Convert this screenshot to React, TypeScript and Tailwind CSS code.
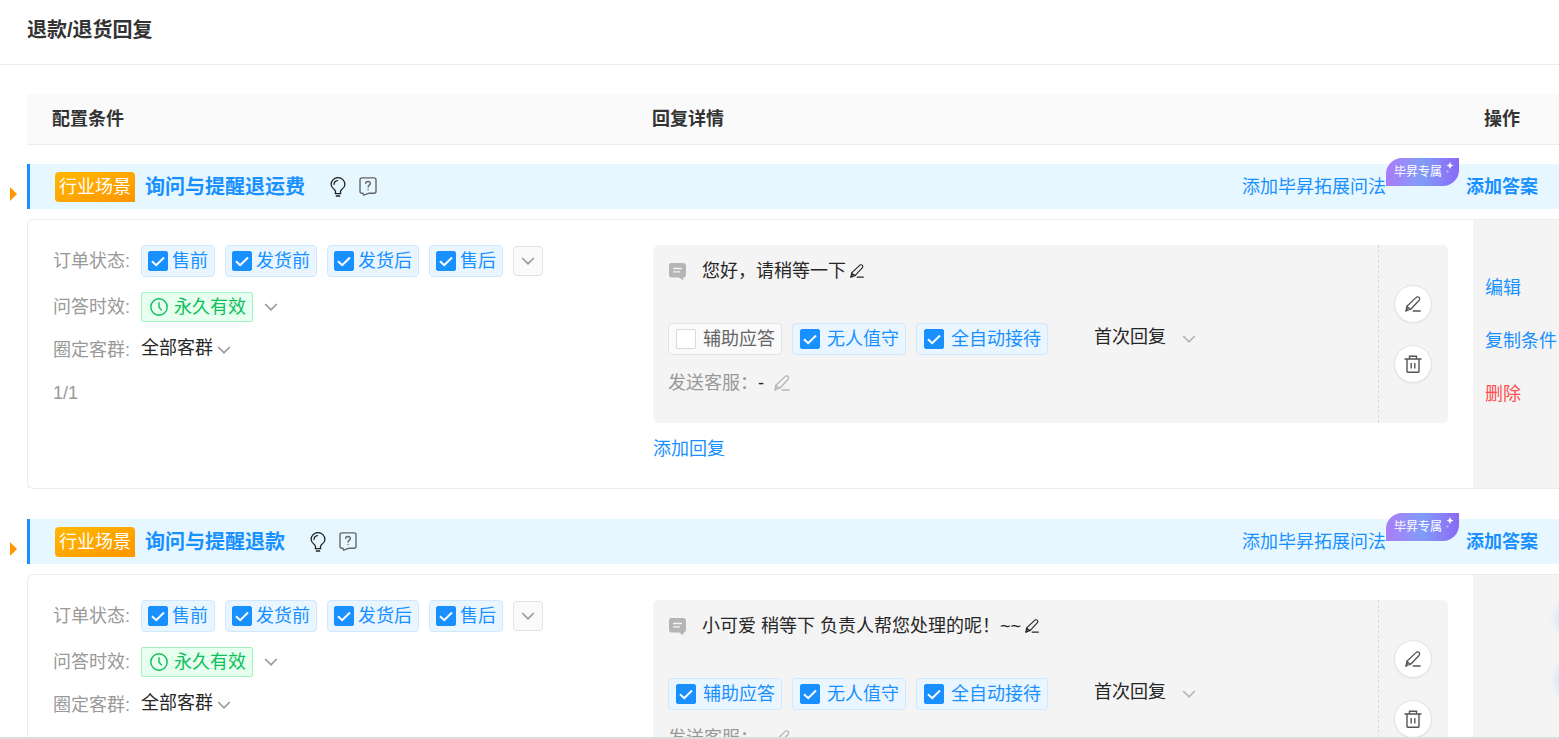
import React, { useState } from "react";

type IconProps = { className?: string };

function ChevronIcon({ className = "" }: IconProps) {
  return (
    <svg viewBox="0 0 14 10" className={`h-[10px] w-[14px] shrink-0 ${className}`} fill="none" stroke="currentColor" strokeWidth="1.7" aria-hidden="true">
      <path d="M1.200 2 7 7.900 12.800 2" />
    </svg>
  );
}

function PencilIcon({ className = "" }: IconProps) {
  return (
    <svg viewBox="0 0 16 16" className={`shrink-0 ${className}`} fill="none" stroke="currentColor" strokeWidth="1.300" strokeLinejoin="round" strokeLinecap="round" aria-hidden="true">
      <path d="M11 1.600c.7-.9 2-1 2.900-.3.9.7 1 2 .3 2.900L6 13 1 15l.9-4.800z" />
      <path d="M1.900 10.400 5.600 13.200M1 15l2-3" />
      <path d="M8.200 15h7" />
    </svg>
  );
}

function TrashIcon({ className = "" }: IconProps) {
  return (
    <svg viewBox="0 0 18 18" className={`shrink-0 ${className}`} fill="none" stroke="currentColor" strokeWidth="1.400" aria-hidden="true">
      <path d="M.5 4h17M5.500 4V1.200h7V4M3 4v12.500q0 .7.700.7h10.600q.7 0 .7-.7V4M7.200 8v5.500M10.800 8v5.500" />
    </svg>
  );
}

function BulbIcon({ className = "" }: IconProps) {
  return (
    <svg viewBox="0 0 16 20" className={`shrink-0 ${className}`} fill="none" stroke="currentColor" strokeWidth="1.3" strokeLinecap="round" aria-hidden="true">
      <path d="M5.500 16v-1.500c0-1-.6-1.500-1.500-2.300A6.800 6.800 0 0 1 1.100 7.500a6.900 6.900 0 0 1 13.800 0c0 2-1.200 3.600-2.900 4.700-.9.800-1.500 1.300-1.500 2.300V16" />
      <path d="M5.200 16.600h5.600M6.300 19h3.400M4 7.400A4 4 0 0 1 7.600 3.600" />
    </svg>
  );
}

function QuestionIcon({ className = "" }: IconProps) {
  return (
    <svg viewBox="0 0 18 19" className={`shrink-0 ${className}`} fill="none" stroke="currentColor" strokeWidth="1.400" strokeLinecap="round" strokeLinejoin="round" aria-hidden="true">
      <path d="M3 .9h12q2 0 2 2v11.400q0 2-2 2H9.500L4.700 18.200l-.8-1.900H3q-2 0-2-2V2.900Q1 .9 3 .9z" />
      <path d="M6.700 6.300C6.800 3.900 11.300 3.800 11.300 6.400c0 1.700-2.200 1.700-2.200 3.600M9.100 12.400v.2" />
    </svg>
  );
}

function MessageIcon({ className = "" }: IconProps) {
  return (
    <svg viewBox="0 0 18 18" className={`shrink-0 ${className}`} aria-hidden="true">
      <path fill="currentColor" d="M3.500 1h11.500q3 0 3 3v8.500q0 2.600-2.500 3v2.300l-1.500-.3-3-2h-7.500q-2.500 0-2.500-3V4q0-3 2.500-3z" />
      <path d="M5 6.500h9M5 9.800h7" stroke="#f4f4f4" strokeWidth="1.300" fill="none" />
    </svg>
  );
}

function ClockIcon({ className = "" }: IconProps) {
  return (
    <svg viewBox="0 0 18 18" className={`shrink-0 ${className}`} fill="none" stroke="currentColor" strokeWidth="1.400" aria-hidden="true">
      <circle cx="9" cy="9" r="8.200" />
      <path d="M9 4.200v5.100l2.800 3.100" />
    </svg>
  );
}

function CheckChip({ label, checked, roomy = false }: { label: string; checked: boolean; roomy?: boolean }) {
  const [on, setOn] = useState(checked);
  return (
    <label
      className={`flex h-8 shrink-0 cursor-pointer items-center whitespace-nowrap rounded border pr-1.5 ${roomy ? "gap-[7px] pl-[7px]" : "gap-1 pl-1.5"} ${
        on ? "border-[#cfe8ff] bg-[#eaf6ff] text-[#1890ff]" : "border-[#e4e4e4] bg-[#fafafa] text-[#666]"
      }`}
    >
      <span className="grid size-5 place-items-center">
        <input
          type="checkbox"
          checked={on}
          onChange={(e) => setOn(e.target.checked)}
          className="col-start-1 row-start-1 size-5 appearance-none rounded-xs border border-[#d9d9d9] bg-white checked:border-[#1890ff] checked:bg-[#1890ff]"
        />
        {on && (
          <svg viewBox="0 0 14 11" className="pointer-events-none col-start-1 row-start-1 h-[11px] w-[14px]" fill="none" stroke="#fff" strokeWidth="2" aria-hidden="true">
            <path d="M1 5.200 5.200 9.200 13 1.500" />
          </svg>
        )}
      </span>
      {label}
    </label>
  );
}

function SelectField({ label, value, className }: { label: string; value: string; className: string }) {
  return (
    <span className={`flex items-center ${className}`}>
      <select aria-label={label} defaultValue={value} className="h-7 cursor-pointer appearance-none bg-transparent pb-1 leading-6 text-[#262626]">
        <option>{value}</option>
      </select>
      <ChevronIcon />
    </span>
  );
}

type Scene = {
  title: string;
  reply: string;
  modes: { label: string; checked: boolean }[];
  sender: string;
  actions: boolean;
};

const orderStates = ["售前", "发货前", "发货后", "售后"];

const scenes: Scene[] = [
  {
    title: "询问与提醒退运费",
    reply: "您好，请稍等一下",
    modes: [
      { label: "辅助应答", checked: false },
      { label: "无人值守", checked: true },
      { label: "全自动接待", checked: true },
    ],
    sender: "-",
    actions: true,
  },
  {
    title: "询问与提醒退款",
    reply: "小可爱 稍等下 负责人帮您处理的呢！~~",
    modes: [
      { label: "辅助应答", checked: true },
      { label: "无人值守", checked: true },
      { label: "全自动接待", checked: true },
    ],
    sender: "-",
    actions: false,
  },
];

function ExclusiveBadge() {
  return (
    <span className="absolute -top-[14px] left-full flex h-7 w-[73px] gap-0.5 rounded-tl-2xl rounded-br-2xl bg-linear-to-r from-[#a87cf8] via-[#7f9cf8] to-[#8a68f6] pl-2 text-xs leading-7 whitespace-nowrap text-white">
      毕昇专属
      <svg viewBox="0 0 10 14" className="mt-[3px] h-[14px] w-[10px] shrink-0" fill="#fff" aria-hidden="true">
        <path d="M6 1 7.100 3.400 9.500 4.500 7.100 5.600 6 8 4.900 5.600 2.500 4.500 4.900 3.400z" />
        <circle cx="3.500" cy="10.500" r="1" opacity=".6" />
      </svg>
    </span>
  );
}

function SceneBar({ title }: { title: string }) {
  return (
    <div className="flex h-[45px] items-center border-l-3 border-[#1890ff] bg-[#e6f7ff] pr-[21px] pl-[25px]">
      <span className="flex h-[30px] items-center rounded rounded-br-none bg-linear-to-br from-[#ffb800] to-[#ff9500] px-1 text-white">行业场景</span>
      <h2 className="ml-2.5 text-xl font-bold text-[#1890ff]">{title}</h2>
      <button type="button" aria-label="提示" className="ml-[25px] text-[#222]">
        <BulbIcon className="block h-5 w-4" />
      </button>
      <button type="button" aria-label="帮助" className="ml-[13px] text-[#666]">
        <QuestionIcon className="block h-[19px] w-[18px]" />
      </button>
      <span className="relative ml-auto flex">
        <a href="#expand" className="leading-[30px] text-[#1890ff]">添加毕昇拓展问法</a>
        <ExclusiveBadge />
      </span>
      <a href="#answer" className="ml-20 leading-[30px] font-bold text-[#1890ff]">添加答案</a>
    </div>
  );
}

function Conditions() {
  return (
    <div className="flex flex-col pt-[25px] pl-[25px] text-[#999]">
      <div className="flex h-8 items-center">
        <span className="w-[88px] shrink-0">订单状态:</span>
        <div className="flex items-center gap-2.5">
          {orderStates.map((s) => (
            <CheckChip key={s} label={s} checked />
          ))}
          <button type="button" aria-label="更多状态" className="grid size-[30px] place-items-center rounded border border-[#e2e2e2] bg-[#fafafa]">
            <ChevronIcon />
          </button>
        </div>
      </div>
      <div className="mt-[15px] flex h-[30px] items-center">
        <span className="w-[88px] shrink-0">问答时效:</span>
        <button type="button" className="flex items-center gap-[11px]">
          <span className="flex h-[30px] items-center gap-1.5 rounded-xs border border-[#a3f0c0] bg-[#e6ffee] pr-1.5 pl-2 text-[#0dbf5c]">
            <ClockIcon className="size-[18px]" />
            永久有效
          </span>
          <ChevronIcon />
        </button>
      </div>
      <div className="mt-4 flex h-6 items-center">
        <span className="w-[88px] shrink-0">圈定客群:</span>
        <SelectField label="圈定客群" value="全部客群" className="gap-1" />
      </div>
      <div className="mt-[19px] h-6 leading-6">1/1</div>
    </div>
  );
}

function ReplyDetail({ scene }: { scene: Scene }) {
  return (
    <div className="pt-[25px] pr-[25px] pb-[27px]">
      <div className="flex rounded-md bg-[#f4f4f4]">
        <div className="min-w-0 flex-1 pt-3 pb-7 pl-[15px]">
          <div className="flex h-7 items-center text-[#262626]">
            <MessageIcon className="size-[18px] text-[#b5b5b5]" />
            <span className="ml-4">{scene.reply}</span>
            <button type="button" aria-label="编辑回复" className="ml-1">
              <PencilIcon className="block size-[14px]" />
            </button>
          </div>
          <div className="mt-[38px] flex h-8 items-center gap-2.5">
            {scene.modes.map((m) => (
              <CheckChip key={m.label} label={m.label} checked={m.checked} roomy />
            ))}
            <SelectField label="回复时机" value="首次回复" className="ml-9 gap-4 text-[#b5b5b5]" />
          </div>
          <div className="mt-4 flex h-6 items-center text-[#999]">
            发送客服：
            <span className="text-[#262626]">{scene.sender}</span>
            <button type="button" aria-label="编辑客服" className="ml-2.5 text-[#b5b5b5]">
              <PencilIcon className="block size-4" />
            </button>
          </div>
        </div>
        <div className="flex w-[70px] flex-col items-center justify-center gap-[22px] border-l border-dashed border-[#d9d9d9] pr-0.5 text-[#555]">
          <button type="button" aria-label="编辑" className="grid size-[38px] place-items-center rounded-full border border-[#e2e2e2] bg-white shadow-xs">
            <PencilIcon className="size-4" />
          </button>
          <button type="button" aria-label="删除回复" className="grid size-[38px] place-items-center rounded-full border border-[#e2e2e2] bg-white shadow-xs">
            <TrashIcon className="size-[18px]" />
          </button>
        </div>
      </div>
      <a href="#reply" className="mt-[14px] block h-6 w-fit leading-6 text-[#1890ff]">添加回复</a>
    </div>
  );
}

function SceneSection({ scene }: { scene: Scene }) {
  return (
    <section className="flex">
      <div className="w-[27px] shrink-0 pt-[23px] pl-2.5">
        <svg viewBox="0 0 7 14" className="h-[14px] w-[7px]" fill="#ff9800" aria-hidden="true">
          <path d="M0 0 7 7 0 14z" />
        </svg>
      </div>
      <div className="min-w-0 flex-1">
        <SceneBar title={scene.title} />
        <div className="mt-2.5 grid grid-cols-[625px_1fr_86px] overflow-hidden rounded-l-md border border-r-0 border-[#ebebeb]">
          <Conditions />
          <ReplyDetail scene={scene} />
          <div className="flex flex-col gap-[29px] bg-[#f4f4f4] pt-14 pl-3 leading-6 whitespace-nowrap">
            {scene.actions && (
              <>
                <a href="#edit" className="text-[#1890ff]">编辑</a>
                <a href="#copy" className="text-[#1890ff]">复制条件</a>
                <a href="#delete" className="text-[#ff4d4f]">删除</a>
              </>
            )}
          </div>
        </div>
      </div>
    </section>
  );
}

export default function App() {
  return (
    <div className="relative flex h-screen flex-col overflow-hidden border-b-2 border-[#dcdcdc] bg-white font-['Liberation_Sans','Noto_Sans_CJK_SC',sans-serif] text-lg">
      <header className="flex h-[65px] shrink-0 items-center border-b border-[#ebebeb] px-[27px] pb-1">
        <h1 className="text-xl font-bold text-[#333]">退款/退货回复</h1>
      </header>
      <main className="min-h-0 flex-1 overflow-hidden pt-[29px]">
        <div className="ml-[27px] grid h-[51px] grid-cols-[600px_1fr_75px] items-center border-b border-[#ebebeb] bg-[#fafafa] pl-[25px] font-bold text-[#333]">
          <span>配置条件</span>
          <span>回复详情</span>
          <span>操作</span>
        </div>
        <div className="mt-[19px] flex flex-col gap-[30px]">
          {scenes.map((s) => (
            <SceneSection key={s.title} scene={s} />
          ))}
        </div>
      </main>
      <div className="pointer-events-none absolute top-[604px] left-full flex flex-col gap-[34px]" aria-hidden="true">
        <span className="size-7 rounded-full shadow-[0_0_10px_2px_#c8e2ff]" />
        <span className="size-7 rounded-full shadow-[0_0_10px_2px_#c8e2ff]" />
      </div>
    </div>
  );
}
